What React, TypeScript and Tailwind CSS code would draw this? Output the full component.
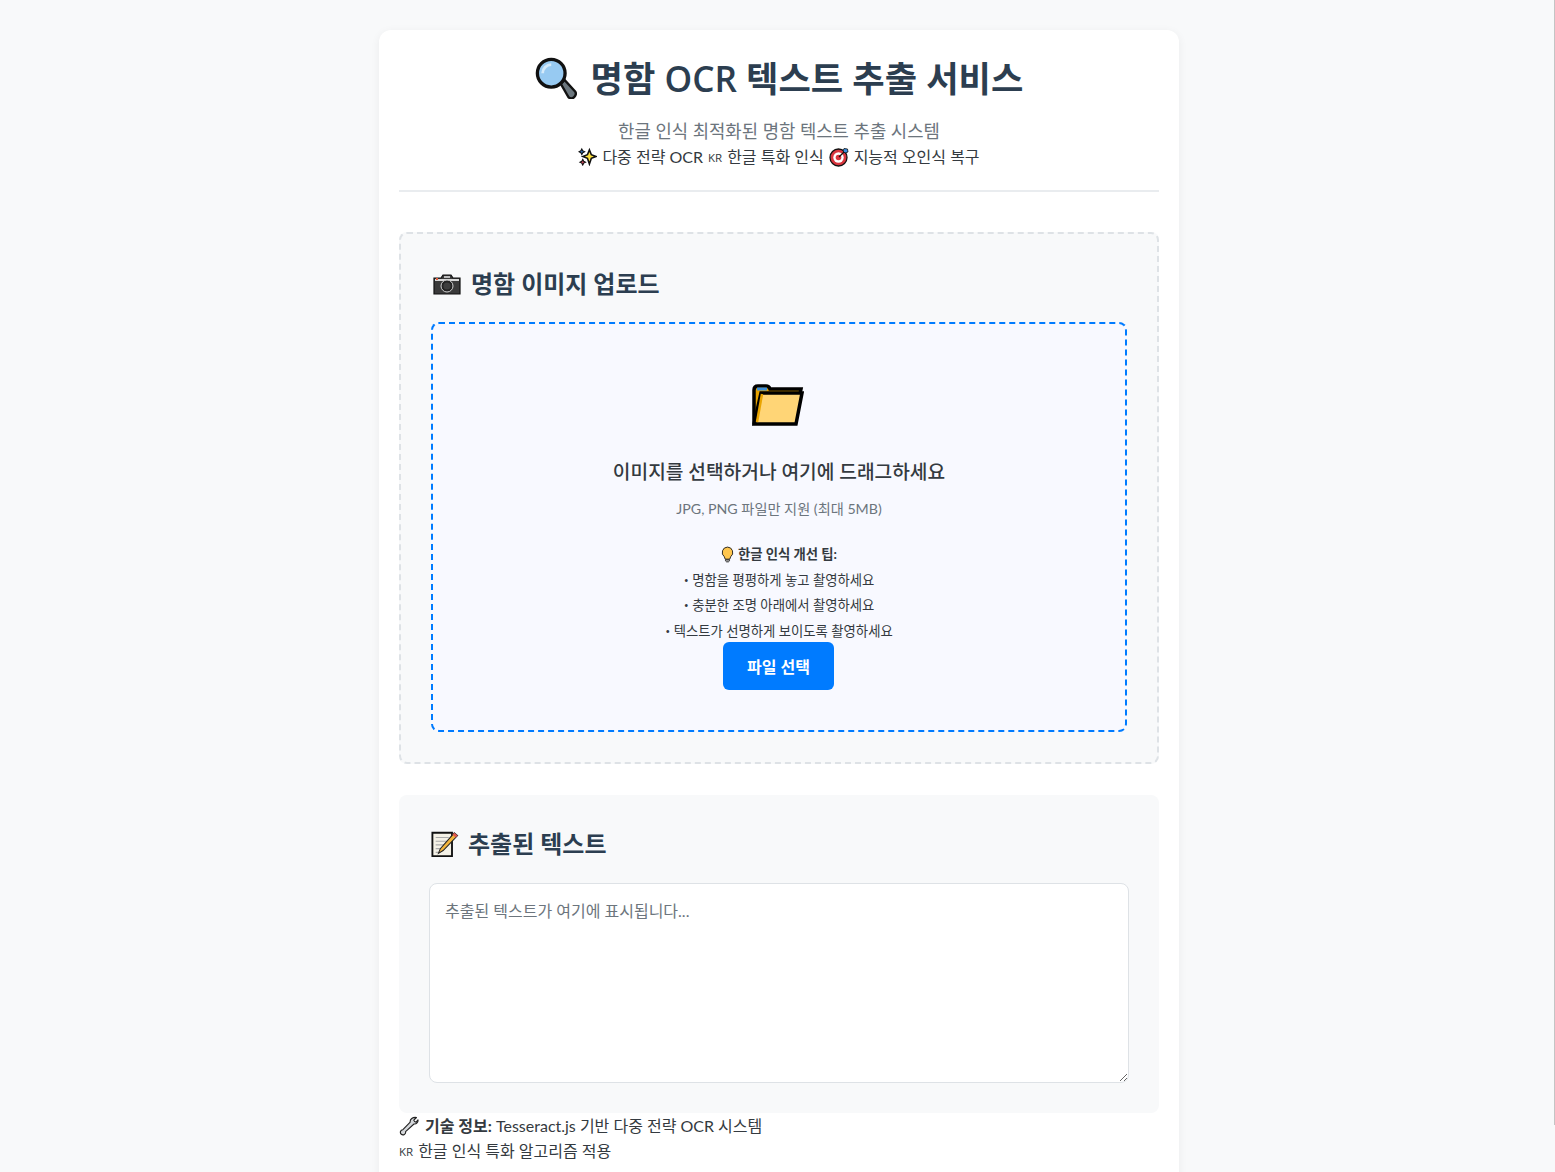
const fontStack = "font-['Lato','Noto_Sans_CJK_KR',sans-serif]";
const flagFont = "font-['Open_Sans',sans-serif]";

function MagnifierIcon() {
  return (
    <svg viewBox="0 0 44 44" className="h-[42px] w-[42px] shrink-0">
      <path d="M27 28l4-4 11 12q2 3 -1 6t-6 0z" fill="#6b767d" stroke="#111" strokeWidth="2.5" />
      <circle cx="17" cy="17" r="14.5" fill="#97caf2" stroke="#111" strokeWidth="3.5" />
      <path d="M8 17a9 9 0 0 1 9-9" fill="none" stroke="#d5ebfb" strokeWidth="3" />
    </svg>
  );
}

function SparkleIcon() {
  return (
    <svg viewBox="0 0 20 20" className="h-[19px] w-[19px] shrink-0">
      <path d="M12 3l2 5 5 2-5 2-2 6-2-6-5-2 5-2z" fill="#ffe23d" stroke="#111" strokeWidth="1.6" />
      <path d="M4 2l1 2 2 1-2 1-1 2-1-2-2-1 2-1z" fill="#2f6fb5" stroke="#111" strokeWidth="1.1" />
      <path d="M5 13l1 2 2 1-2 1-1 2-1-2-2-1 2-1z" fill="#c9485b" stroke="#111" strokeWidth="1.1" />
    </svg>
  );
}

function TargetIcon() {
  return (
    <svg viewBox="0 0 20 20" className="h-[20px] w-[20px] shrink-0">
      <circle cx="9.5" cy="10.5" r="8.5" fill="#d9363e" stroke="#111" strokeWidth="1.3" />
      <circle cx="9.5" cy="10.5" r="5.2" fill="#fff" />
      <circle cx="9.5" cy="10.5" r="2.8" fill="#d9363e" />
      <path d="M10 10L17 3" stroke="#111" strokeWidth="1.2" />
      <path d="M15 1.500l3.500 0.5 0.5 3-3 1-2-2z" fill="#3a8fe0" stroke="#111" strokeWidth="0.8" />
    </svg>
  );
}

function CameraIcon() {
  return (
    <svg viewBox="0 0 28 22" className="ml-[2px] h-[22px] w-[28px] shrink-0">
      <path d="M1 5h7l2-3h8l2 3h7v16H1z" fill="#3a3a3a" stroke="#111" strokeWidth="1.2" />
      <rect x="2" y="6" width="24" height="2" fill="#d8d8d8" />
      <rect x="11" y="3" width="6" height="2" fill="#bdbdbd" />
      <circle cx="14" cy="13" r="6" fill="#222" stroke="#d0d0d0" strokeWidth="1" />
      <circle cx="14" cy="13" r="3.600" fill="#3d3d3d" />
      <rect x="3" y="5" width="2" height="2" fill="#e05a3a" />
    </svg>
  );
}

function FolderIcon() {
  return (
    <svg viewBox="0 0 52 42" className="mr-[2px] h-[42px] w-[52px]">
      <path d="M2 40V6q0-4 4-4h8q3 0 4 3h31l-1 5" fill="#e9a400" stroke="#000" strokeWidth="3.5" />
      <rect x="5" y="3.500" width="10" height="3" fill="#3f8fd8" />
      <path d="M9 9h41l-6 31H2z" fill="#ffd576" stroke="#000" strokeWidth="3.5" strokeLinejoin="miter" />
      <path d="M5 38L10 10" stroke="#e9a400" strokeWidth="2.5" />
    </svg>
  );
}

function BulbIcon() {
  return (
    <svg viewBox="0 0 14 18" className="h-[17px] w-[13px] shrink-0">
      <path d="M7 1a5.800 5.800 0 0 0-3.400 10.400L4.500 14h5l.9-2.600A5.800 5.800 0 0 0 7 1z" fill="#ffc64d" stroke="#222" strokeWidth="1" />
      <path d="M4.800 14.500h4.400v1.400L8 17H6l-1.200-1.100z" fill="#9a9a9a" stroke="#222" strokeWidth="0.8" />
    </svg>
  );
}

function MemoIcon() {
  return (
    <svg viewBox="0 0 30 28" className="ml-[2px] h-[28px] w-[28px] shrink-0">
      <path d="M1.500 2h21v25h-21z" fill="#f4f1e6" stroke="#111" strokeWidth="2" />
      <path d="M5 7h14M5 11h13M5 15h10M5 19h7M5 23h5" stroke="#a9a9a9" strokeWidth="1.2" />
      <path d="M25 2l3.500 3L13 21l-5 3 2-5z" fill="#f3b43a" stroke="#222" strokeWidth="1.1" />
      <path d="M25 2l3.500 3-2 2-3.500-3z" fill="#e0574d" />
    </svg>
  );
}

function WrenchIcon() {
  return (
    <svg viewBox="0 0 20 20" className="h-[20px] w-[20px] shrink-0">
      <path d="M17.500 1.500l-2.700 2.700.8 1.400 1.400.6 2-2.400c.4 2.500-1.600 4.600-4 4.200L6.600 15.600c.5 2.600-2.400 4.200-4.300 2.700-1.700-1.500-1-4.500 1.600-4.600l7.300-7.600c-.5-2.800 2.500-5.300 6.300-4.600z" fill="#d4d7da" stroke="#222" strokeWidth="1.1" strokeLinejoin="round" />
    </svg>
  );
}

export default function App() {
  return (
    <div className={`relative h-screen overflow-hidden bg-[#f8f9fa] ${fontStack}`}>
      <div className="absolute top-0 right-0 h-[1125px] w-px bg-[#c4c4c4]" />
      <div className="w-[1558px] pt-[30px]">
        <div className="mx-auto w-[800px] rounded-xl bg-white p-5 shadow-[0_2px_10px_rgba(0,0,0,0.06)]">
          <header className="border-b-2 border-[#e9ecef] pb-[21px] text-center">
            <h1 className="flex h-[56px] items-center justify-center gap-[14px] font-['Open_Sans','Noto_Sans_CJK_KR',sans-serif] text-[35.2px] leading-[56px] font-semibold text-[#2c3e50]">
              <MagnifierIcon />
              <span>명함 OCR 텍스트 추출 서비스</span>
            </h1>
            <p className="mt-[12px] text-[17.8px] leading-[26px] text-[#6c757d]">한글 인식 최적화된 명함 텍스트 추출 시스템</p>
            <p className="flex h-[25px] items-center justify-center gap-[5px] text-[16px] leading-[25px] text-[#343a40]">
              <SparkleIcon />
              <span>다중 전략 OCR</span>
              <span className={`${flagFont} pt-[2px] text-[11.5px]`}>KR</span>
              <span>한글 특화 인식</span>
              <TargetIcon />
              <span>지능적 오인식 복구</span>
            </p>
          </header>

          <section className="mt-[40px] rounded-lg border-2 border-dashed border-[#dee2e6] bg-[#f8f9fa] p-[30px]">
            <h2 className="flex h-[40px] items-center gap-[10px] text-[24px] leading-[40px] font-semibold text-[#2c3e50]">
              <CameraIcon />
              <span>명함 이미지 업로드</span>
            </h2>
            <div className="mt-[18px] flex h-[410px] flex-col items-center rounded-lg border-2 border-dashed border-[#007bff] bg-[#f8f9ff] pt-[60px]">
              <FolderIcon />
              <p className="mt-[30px] text-[19.2px] leading-[32px] font-medium text-[#343a40]">이미지를 선택하거나 여기에 드래그하세요</p>
              <p className="mt-[10px] text-[14.2px] leading-[22px] text-[#6c757d]">JPG, PNG 파일만 지원 (최대 5MB)</p>
              <div className="mt-[22px] -mb-[2px] text-center text-[13.35px] leading-[25.6px] text-[#343a40]">
                <p className="flex items-center justify-center gap-[4px] font-bold">
                  <BulbIcon />
                  <span>한글 인식 개선 팁:</span>
                </p>
                <p><span className={flagFont}>•</span> 명함을 평평하게 놓고 촬영하세요</p>
                <p><span className={flagFont}>•</span> 충분한 조명 아래에서 촬영하세요</p>
                <p><span className={flagFont}>•</span> 텍스트가 선명하게 보이도록 촬영하세요</p>
              </div>
              <button className="mr-[1px] h-[48px] w-[111px] rounded-md bg-[#007bff] pt-[2px] text-[16px] font-semibold text-white">파일 선택</button>
            </div>
          </section>

          <section className="mt-[31px] rounded-lg bg-[#f8f9fa] p-[30px]">
            <h2 className="flex h-[38px] items-center gap-[9px] text-[24px] leading-[38px] font-semibold text-[#2c3e50]">
              <MemoIcon />
              <span>추출된 텍스트</span>
            </h2>
            <textarea
              readOnly
              placeholder="추출된 텍스트가 여기에 표시됩니다..."
              className="mt-[20px] block h-[200px] w-full rounded-lg border border-[#dee2e6] bg-white p-[15px] text-[16px] leading-[24px] text-[#343a40] outline-none placeholder:text-[#6c757d]"
            />
          </section>

          <div className="text-[16px] leading-[25px] text-[#343a40]">
            <p className="flex h-[25px] items-center gap-[6px]">
              <WrenchIcon />
              <span><strong className="font-bold">기술 정보:</strong> Tesseract.js 기반 다중 전략 OCR 시스템</span>
            </p>
            <p className="flex h-[25px] items-center gap-[5px]">
              <span className={`${flagFont} pt-[2px] text-[11.5px]`}>KR</span>
              <span>한글 인식 특화 알고리즘 적용</span>
            </p>
          </div>
        </div>
      </div>
    </div>
  );
}
